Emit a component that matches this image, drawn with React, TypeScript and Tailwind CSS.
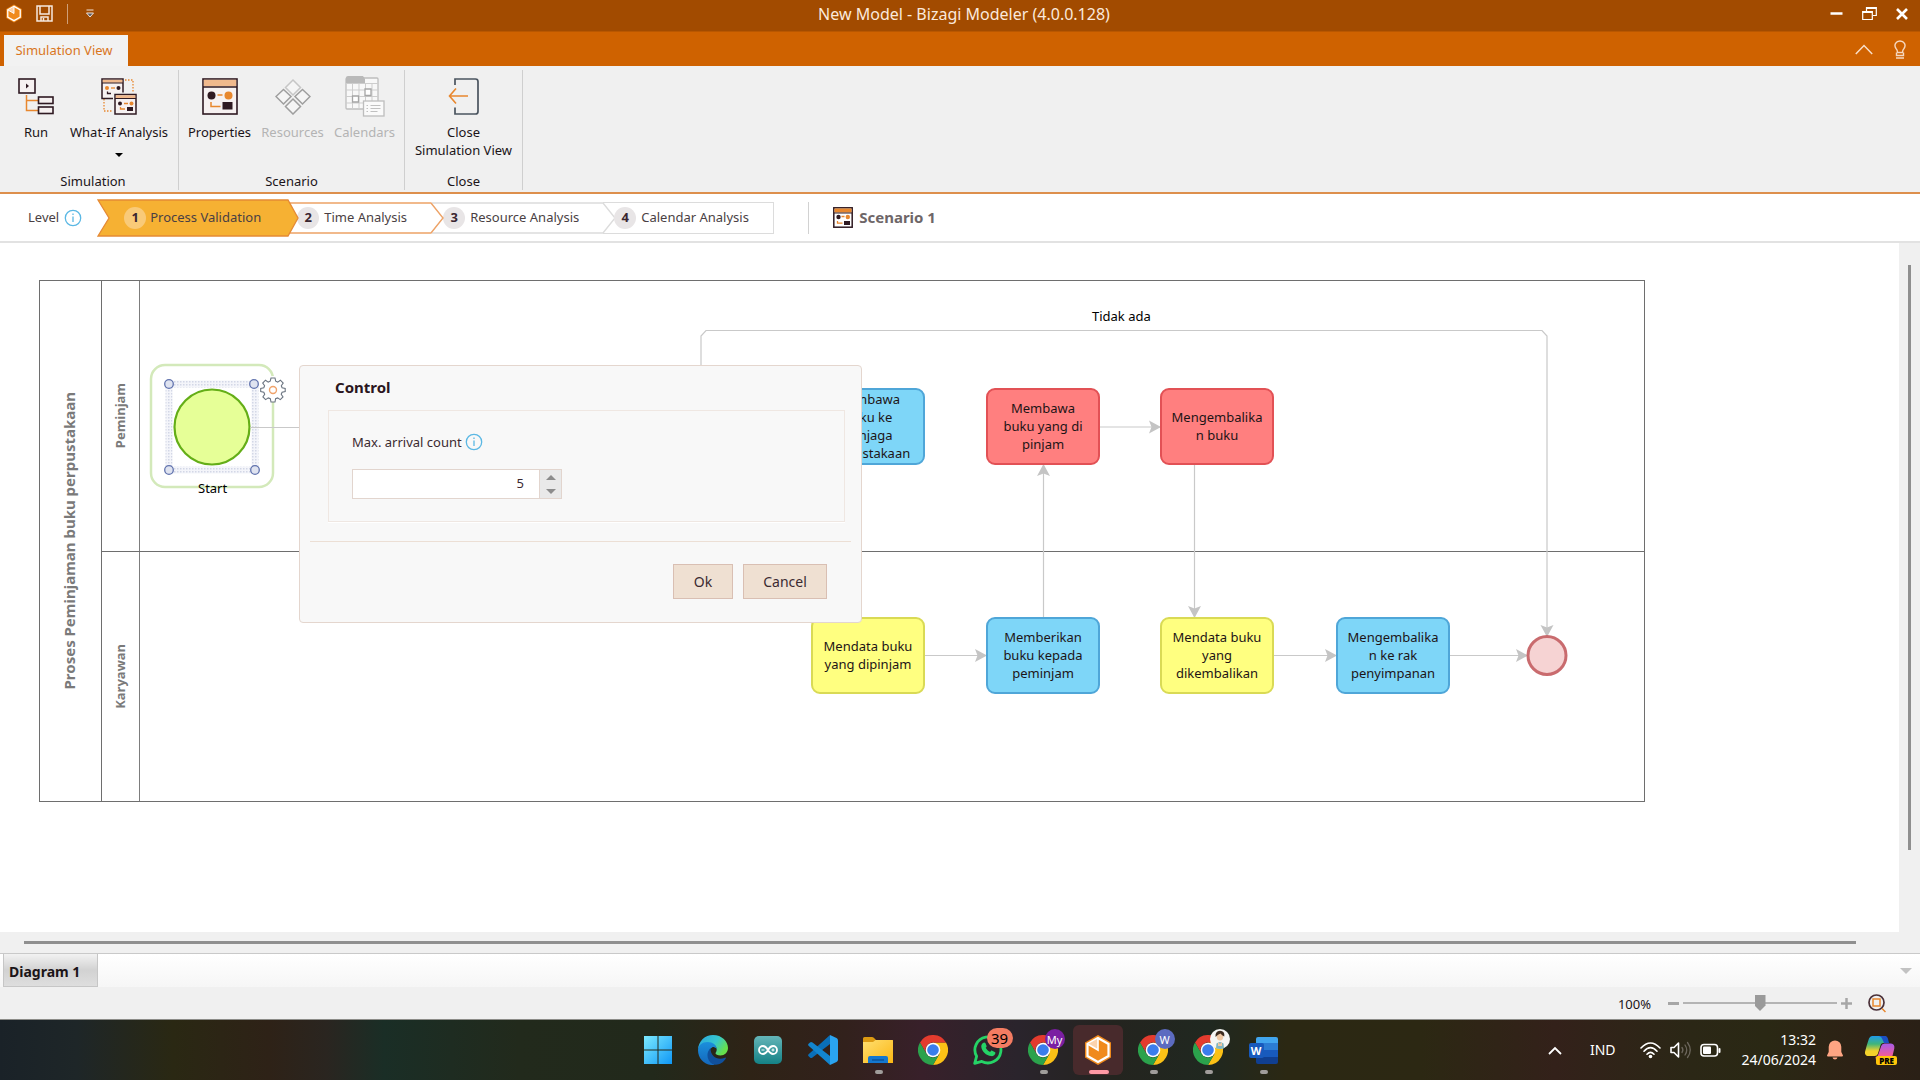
import { useState, type ReactNode } from "react";

const DARK = "#2f1a22";
const ORANGE = "#e8872e";

/* ---------- shared drawings ---------- */

function BizagiMark({ className }: { className: string }) {
  return (
    <svg viewBox="0 0 30 32" className={className} aria-hidden="true">
      <path d="M15 1 28 8.5v15L15 31 2 23.500V8.500z" fill="#f08a1c" />
      <path d="M15 4 4.500 10v12L15 28l10.500-6V10z" fill="#f08a1c" stroke="#fff" strokeWidth="2.200" />
      <path d="M5 10 15 4.500V16z" fill="#fbd3ae" />
      <path d="M15 4v12L5 10.200" fill="none" stroke="#fff" strokeWidth="1.600" />
    </svg>
  );
}

function InfoIcon() {
  return (
    <svg viewBox="0 0 18 18" className="size-[18px] shrink-0" aria-hidden="true">
      <circle cx="9" cy="9" r="7.700" fill="none" stroke="#5bb8e4" strokeWidth="1.300" />
      <path d="M9 7.500v5.500M9 4.500v1.500" stroke="#5bb8e4" strokeWidth="1.300" />
    </svg>
  );
}

function ScenarioIcon({ className }: { className: string }) {
  return (
    <svg viewBox="0 0 36 37" className={className} aria-hidden="true">
      <rect x="1" y="1" width="34" height="35" fill="#f6f1f1" stroke={DARK} strokeWidth="1.600" />
      <rect x="1.800" y="1.800" width="32.400" height="6.500" fill="#f0b98d" />
      <path d="M1 9h34" stroke={DARK} strokeWidth="1.400" />
      <circle cx="9.500" cy="17.500" r="4" fill={DARK} />
      <circle cx="26.500" cy="17.500" r="4" fill={ORANGE} />
      <path d="M15.500 17h5M9 24v4.500h9.500" fill="none" stroke={ORANGE} strokeWidth="1.500" />
      <rect x="20.500" y="24" width="10" height="7.500" fill={DARK} />
    </svg>
  );
}

function SmallScenarioIcon() {
  return (
    <svg viewBox="0 0 20 21" className="h-[21px] w-5" aria-hidden="true">
      <rect x=".8" y=".8" width="18.400" height="19.400" fill="#fff" stroke={DARK} strokeWidth="1.500" />
      <rect x="1.500" y="1.500" width="17" height="4" fill={ORANGE} />
      <path d="M1 6h18" stroke={DARK} />
      <circle cx="5.500" cy="10" r="2.200" fill={DARK} />
      <circle cx="14.800" cy="10" r="2.200" fill={ORANGE} />
      <path d="M8.500 9.500h3M4.500 14v2.200h5" fill="none" stroke={ORANGE} strokeWidth="1.300" />
      <rect x="11" y="14" width="6" height="4" fill={DARK} />
    </svg>
  );
}

/* ---------- ribbon icons ---------- */

function RunIcon() {
  return (
    <svg viewBox="0 0 36 37" className="h-[37px] w-9" fill="none" aria-hidden="true">
      <path d="M8.500 17v15.500H20M8.500 22.500H20" stroke={ORANGE} strokeWidth="1.500" />
      <g stroke={DARK} strokeWidth="1.600" fill="#f6f1f1">
        <rect x="1" y="1" width="16" height="14" />
        <rect x="20.500" y="19" width="14.500" height="6.500" />
        <rect x="20.500" y="29" width="14.500" height="6.500" />
      </g>
      <path d="M8 5.500 11 8l-3 2.500z" fill={DARK} />
    </svg>
  );
}

function WhatIfIcon() {
  return (
    <svg viewBox="0 0 36 37" className="h-[37px] w-9" fill="none" aria-hidden="true">
      <path d="M24 2h8v12M3 21v12h8" stroke={ORANGE} strokeWidth="1.300" strokeDasharray="1.500 1.500" />
      <rect x="1" y="1" width="21" height="19.500" fill="#f6f1f1" stroke={DARK} strokeWidth="1.500" />
      <rect x="1.800" y="1.800" width="19.500" height="3" fill="#f0b98d" />
      <path d="M1 5h21" stroke={DARK} />
      <circle cx="6" cy="10" r="2" fill={ORANGE} />
      <circle cx="17.500" cy="10" r="2" fill={DARK} />
      <path d="M10 10h4" stroke={ORANGE} strokeWidth="1.300" />
      <path d="M6.500 13.500v2H10" stroke={DARK} strokeWidth="1.300" />
      <rect x="12" y="14.500" width="25" height="24" fill="#f0f0f0" />
      <rect x="14" y="16.500" width="21" height="19.500" fill="#f6f1f1" stroke={DARK} strokeWidth="1.500" />
      <rect x="14.800" y="17.300" width="19.500" height="3" fill="#f0b98d" />
      <path d="M14 20.500h21" stroke={DARK} />
      <circle cx="19" cy="25.500" r="2" fill={DARK} />
      <circle cx="30.500" cy="25.500" r="2" fill={ORANGE} />
      <path d="M23 25.500h4M19.500 29v2H24" stroke={ORANGE} strokeWidth="1.300" />
      <rect x="26" y="29" width="6" height="4" fill={DARK} />
    </svg>
  );
}

function ResourcesIcon() {
  return (
    <svg viewBox="0 0 36 37" className="h-[37px] w-9" fill="#f5f5f5" strokeWidth="1.500" aria-hidden="true">
      <path d="m18 2 7.500 7.500L18 17l-7.500-7.500z" stroke="#c6c6c6" />
      <path d="m8.500 11.500 7.500 7-7.500 7.500L1 18.500zM27.500 11.500l7.500 7-7.500 7.500-7.500-7.500zM18 21l7.500 7.500L18 36l-7.500-7.500z" stroke="#9e9e9e" />
    </svg>
  );
}

function CalendarsIcon() {
  return (
    <svg viewBox="0 0 40 42" className="h-[42px] w-10" fill="none" aria-hidden="true">
      <rect x="1" y="3" width="32" height="31" rx="1" fill="#f8f8f8" stroke="#bdbdbd" strokeWidth="1.300" />
      <path d="M1 2.500Q1 1 3 1h15l2 3v4H1z" fill="#b9b9b9" />
      <path d="M1 8.500h32M1 15h32M1 21.500h32M1 28h32M7.500 9v25M14 9v25M20.500 9v25M27 9v25" stroke="#cdcdcd" />
      <path d="M20 14h6v6.500h-6zM7.500 21h6v6h-6z" fill="#fff" stroke="#a5a5a5" strokeWidth="1.300" />
      <rect x="18.500" y="26" width="20.500" height="15" fill="#fafafa" stroke="#bdbdbd" strokeWidth="1.300" />
      <path d="M21.500 30.500h1.500M21.500 33.500h1.500M21.500 36.500h1.500M25.500 30.500h10M25.500 33.500h10M25.500 36.500h7" stroke="#c0c0c0" strokeWidth="1.200" />
    </svg>
  );
}

function CloseViewIcon() {
  return (
    <svg viewBox="0 0 32 37" className="h-[37px] w-8" fill="none" aria-hidden="true">
      <path d="M7 7V1h20.500q2.500 0 2.500 2.500v30q0 2.500-2.500 2.500H7v-6.500" stroke="#4a545f" strokeWidth="1.700" />
      <path d="M20 18H1.500M8 10.500 1.500 18l6.500 7.500" stroke={ORANGE} strokeWidth="1.600" />
    </svg>
  );
}

function RibbonButton({ icon, label, width, disabled, children }: { icon: ReactNode; label: ReactNode; width: string; disabled?: boolean; children?: ReactNode }) {
  return (
    <button type="button" disabled={disabled} className={`flex flex-col items-center text-center leading-[18px] disabled:text-[#b4b4b4] ${width}`}>
      <span className="mb-2 flex h-[38px] items-center justify-center">{icon}</span>
      {label}
      {children}
    </button>
  );
}

function RibbonGroup({ title, children }: { title: string; children: ReactNode }) {
  return (
    <section aria-label={title} className="mt-1 flex h-[120px] flex-col justify-between border-r border-[#cfcfcf] px-1 pt-[7px] first:[&>div:last-child]:pl-2">
      <div className="flex">{children}</div>
      <div className="text-center leading-[18px]">{title}</div>
    </section>
  );
}

/* ---------- level steps ---------- */

function StepBadge({ n, active }: { n: number; active?: boolean }) {
  return (
    <span className={`flex size-[22px] shrink-0 items-center justify-center rounded-full text-[13px] font-bold text-[#3a2630] ${active ? "bg-[#f9ca78]" : "bg-[#e8e5e6]"}`}>
      {n}
    </span>
  );
}

function LevelSteps() {
  return (
    <nav aria-label="Level" className="flex items-center text-[13px] text-[#4a3f44]">
      <button type="button" className="relative z-30 flex h-[38px] w-[202px] items-center gap-1 pl-[27px]">
        <svg viewBox="0 0 202 38" className="absolute inset-0 size-full" aria-hidden="true">
          <path d="M1 1h190l10 18-10 18H1l11-18z" fill="#f6b133" stroke="#e58a35" strokeWidth="1.300" />
        </svg>
        <span className="relative flex items-center gap-1"><StepBadge n={1} active />Process Validation</span>
      </button>
      <button type="button" className="relative z-20 -ml-3 flex h-[32px] w-[158px] items-center pl-[10px]">
        <svg viewBox="0 0 158 32" className="absolute inset-0 size-full" aria-hidden="true">
          <path d="M1 1h143l12 15-12 15H1" fill="#fff" stroke="#eda266" strokeWidth="1.400" />
        </svg>
        <span className="relative flex items-center gap-[5px]"><StepBadge n={2} />Time Analysis</span>
      </button>
      <button type="button" className="relative z-10 -ml-[14px] flex h-[32px] w-[186px] items-center pl-[12px]">
        <svg viewBox="0 0 186 32" className="absolute inset-0 size-full" aria-hidden="true">
          <path d="M1 1h171l12 15-12 15H1" fill="#fff" stroke="#dcdcdc" strokeWidth="1.400" />
        </svg>
        <span className="relative flex items-center gap-[5px]"><StepBadge n={3} />Resource Analysis</span>
      </button>
      <button type="button" className="relative -ml-[14px] flex h-[32px] w-[171px] items-center border border-[#dcdcdc] pl-[10px]">
        <span className="relative z-20 flex items-center gap-[5px]"><StepBadge n={4} />Calendar Analysis</span>
      </button>
    </nav>
  );
}

/* ---------- diagram ---------- */

const tasks = [
  { lines: ["Membawa", "buku ke", "penjaga", "perpustakaan"], look: "left-[811px] top-[145px] border-[#4fa6d8] bg-[#7ed6f8]" },
  { lines: ["Membawa", "buku yang di", "pinjam"], look: "left-[986px] top-[145px] border-[#e25155] bg-[#ff7f7f]" },
  { lines: ["Mengembalika", "n buku"], look: "left-[1160px] top-[145px] border-[#e25155] bg-[#ff7f7f]" },
  { lines: ["Mendata buku", "yang dipinjam"], look: "left-[811px] top-[374px] border-[#d9da55] bg-[#ffff80]" },
  { lines: ["Memberikan", "buku kepada", "peminjam"], look: "left-[986px] top-[374px] border-[#4fa6d8] bg-[#7ed6f8]" },
  { lines: ["Mendata buku", "yang", "dikembalikan"], look: "left-[1160px] top-[374px] border-[#d9da55] bg-[#ffff80]" },
  { lines: ["Mengembalika", "n ke rak", "penyimpanan"], look: "left-[1336px] top-[374px] border-[#4fa6d8] bg-[#7ed6f8]" },
];

function Lane({ title, height }: { title: string; height: string }) {
  return (
    <div className={`flex ${height}`}>
      <div className="flex w-[38px] items-center justify-center border-r border-[#7d7d7d]">
        <span className="rotate-180 text-[13px] font-bold text-[#7a7a7a] [writing-mode:vertical-rl]">{title}</span>
      </div>
    </div>
  );
}

function Pool() {
  return (
    <div className="absolute left-[39px] top-[37px] flex w-[1606px] border border-[#6e6e6e]">
      <div className="flex w-[62px] items-center justify-center border-r border-[#6e6e6e] pr-[2px]">
        <span className="rotate-180 text-[15px] font-bold text-[#7a7a7a] [writing-mode:vertical-rl]">Proses Peminjaman buku perpustakaan</span>
      </div>
      <div className="flex-1 divide-y divide-[#6e6e6e]">
        <Lane title="Peminjam" height="h-[271px]" />
        <Lane title="Karyawan" height="h-[249px]" />
      </div>
    </div>
  );
}

function Connections() {
  return (
    <svg width="1700" height="620" className="absolute left-0 top-0" fill="none" aria-hidden="true">
      <defs>
        <marker id="arrow" markerWidth="12" markerHeight="14" refX="11" refY="7" orient="auto" markerUnits="userSpaceOnUse">
          <path d="M0 .5 12 7 0 13.500 2.500 7z" fill="#c4c4c4" />
        </marker>
        <pattern id="dots" width="3" height="3" patternUnits="userSpaceOnUse">
          <rect width="3" height="3" fill="#f4f5fa" />
          <rect width="1.500" height="1.500" fill="#d3d7e6" />
        </pattern>
      </defs>
      <rect x="151" y="122" width="122" height="122" rx="14" stroke="#d3e9ba" strokeWidth="2.500" />
      <rect x="169" y="141" width="86" height="86" stroke="url(#dots)" strokeWidth="7" />
      <circle cx="212" cy="184" r="37.500" fill="#e6ff97" stroke="#64ae17" strokeWidth="2.200" />
      <g fill="#dfe3f0" stroke="#6173ae" strokeWidth="1.300">
        <circle cx="169" cy="141" r="4.300" />
        <circle cx="254" cy="141" r="4.300" />
        <circle cx="169" cy="227" r="4.300" />
        <circle cx="255" cy="227" r="4.300" />
      </g>
      <circle cx="273" cy="146" r="13" fill="#fff" />
      <path
        d="m271 135 4 0 .7 3.200 2 .9 2.700-1.900 2.800 2.800-1.900 2.800.8 2 3.100.6v3.200l-3.100.7-.9 2 1.800 2.600-2.700 2.700-2.700-1.700-2 .8-.6 3.300h-4l-.7-3.300-2-.8-2.700 1.700-2.700-2.700 1.800-2.600-.9-2-3.100-.7v-3.200l3.100-.6.8-2-1.900-2.800 2.800-2.800 2.700 1.900 2-.9z"
        fill="#fff"
        stroke="#6b7480"
        strokeWidth="1.100"
      />
      <circle cx="273" cy="147" r="3.500" stroke="#f0a36b" strokeWidth="1.400" />
      <g stroke="#c9c9c9" strokeWidth="1.200">
        <path d="M250 184.500h60" />
        <path d="M701 145V93l5-5.500h836l5 5.500v300" markerEnd="url(#arrow)" />
        <path d="M1100 184h60" markerEnd="url(#arrow)" />
        <path d="M1043.500 374V222" markerEnd="url(#arrow)" />
        <path d="M1194.500 222v152" markerEnd="url(#arrow)" />
        <path d="M925 412.500h61" markerEnd="url(#arrow)" />
        <path d="M1274 412.500h62" markerEnd="url(#arrow)" />
        <path d="M1450 412.500h77" markerEnd="url(#arrow)" />
      </g>
      <circle cx="1547" cy="412.500" r="19" fill="#f6d3d3" stroke="#c96b6e" strokeWidth="3" />
    </svg>
  );
}

function ControlDialog() {
  const [count, setCount] = useState(5);
  return (
    <div role="dialog" aria-labelledby="dialog-title" className="absolute left-[299px] top-[122px] w-[563px] rounded-[4px] border border-[#e4d6ce] bg-[#f8f8f8] px-[10px] pb-[23px] pt-[9px] text-[#3b2a31]">
      <h2 id="dialog-title" className="pl-[25px] text-[15px] font-bold leading-6 text-[#2b1620]">Control</h2>
      <div className="ml-[18px] mr-[6px] mt-[11px] h-[112px] border border-[#efe7e2] px-[23px] pt-[21px] shadow-[0_1px_0_#fff]">
        <div className="flex items-center gap-[3px] text-[13px] leading-5">
          <label htmlFor="arrivals">Max. arrival count</label>
          <InfoIcon />
        </div>
        <div className="mt-[17px] flex h-[30px] w-[210px] border border-[#e2d5ce] bg-white">
          <input
            id="arrivals"
            value={count}
            onChange={(e) => setCount(Number(e.target.value) || 0)}
            className="w-full min-w-0 flex-1 pr-[15px] text-right text-[13px] outline-none"
          />
          <div className="flex w-[22px] flex-col border-l border-[#e2d5ce] bg-[#e9e9e9]">
            <button type="button" aria-label="Increase" onClick={() => setCount(count + 1)} className="flex flex-1 items-center justify-center">
              <span className="border-x-[5px] border-b-[5px] border-x-transparent border-b-[#8c8c8c]" />
            </button>
            <button type="button" aria-label="Decrease" onClick={() => setCount(count - 1)} className="flex flex-1 items-center justify-center">
              <span className="border-x-[5px] border-t-[5px] border-x-transparent border-t-[#8c8c8c]" />
            </button>
          </div>
        </div>
      </div>
      <div className="mt-[19px] flex justify-end gap-[10px] border-t border-[#ecdfd5] pr-6 pt-[22px] text-sm">
        <button type="button" className="h-[35px] w-[60px] border border-[#d9bfb3] bg-[#efe0d2]">Ok</button>
        <button type="button" className="h-[35px] w-[84px] border border-[#d9bfb3] bg-[#efe0d2]">Cancel</button>
      </div>
    </div>
  );
}

/* ---------- taskbar ---------- */

function ChromeIcon() {
  return (
    <svg viewBox="0 0 30 30" className="size-[30px]" aria-hidden="true">
      <path d="M21.500 18.800 15 30a15 15 0 0 0 13-22.500H15z" fill="#fbc116" />
      <path d="M2 7.500A15 15 0 0 1 28 7.500H15a7.500 7.500 0 0 0-6.500 11.200z" fill="#e33b2e" />
      <path d="M2 7.500 8.500 18.700A7.500 7.500 0 0 0 21.500 18.700L15 30A15 15 0 0 1 2 7.500z" fill="#2ba24c" />
      <circle cx="15" cy="15" r="7.300" fill="#fff" />
      <circle cx="15" cy="15" r="5.800" fill="#3b7ded" />
    </svg>
  );
}

function WindowsIcon() {
  return (
    <svg viewBox="0 0 30 30" className="size-[30px]" aria-hidden="true">
      <defs>
        <linearGradient id="win" x1="0" y1="0" x2="1" y2="1">
          <stop offset="0" stopColor="#7ceaff" />
          <stop offset="1" stopColor="#0f97f5" />
        </linearGradient>
      </defs>
      <path d="M1 1h13.500v13.500H1zM15.500 1H29v13.500H15.500zM1 15.500h13.500V29H1zM15.500 15.500H29V29H15.500z" fill="url(#win)" />
    </svg>
  );
}

function EdgeIcon() {
  return (
    <svg viewBox="0 0 30 30" className="size-[30px]" aria-hidden="true">
      <defs>
        <linearGradient id="edgeTop" x1="0" y1="0" x2="1" y2=".5">
          <stop offset="0" stopColor="#2aa5df" />
          <stop offset=".6" stopColor="#36c6cf" />
          <stop offset="1" stopColor="#66e04c" />
        </linearGradient>
        <linearGradient id="edgeLow" x1="0" y1="0" x2="0" y2="1">
          <stop offset="0" stopColor="#1b8fdc" />
          <stop offset="1" stopColor="#1467bb" />
        </linearGradient>
      </defs>
      <path d="M0 14.500C.5 6 7 0 15 0c9 0 15 6.500 15 13 0 4.500-3.500 7.500-7.500 7.500-3 0-5-1.200-5-2.200 0-.8 1.200-1.300 1.200-3.800 0-3.500-3.200-6-8.200-6C5 8.500 1 11 0 14.500z" fill="url(#edgeTop)" />
      <path d="M0 15c0-5 4.500-8 9.500-8 5.500 0 9 3.200 9.200 7-1-1.500-2.700-2-4-2-3.200 2-4.200 4.500-4.200 7.500 0 5 3 8.500 6.500 10.300C8 31.500 0 24.500 0 15z" fill="url(#edgeLow)" />
      <path d="M12.500 13c-5 5-3.500 13 2 16 4.500 2 10.500-.5 13.300-5.500.3-.8-.3-1.200-1-.8-6.500 3.200-14.500-.7-14.300-9.700z" fill="#10509c" />
    </svg>
  );
}

function ArduinoIcon() {
  return (
    <svg viewBox="0 0 28 28" className="size-7" fill="none" aria-hidden="true">
      <defs>
        <linearGradient id="ard" x1="0" y1="0" x2="0" y2="1">
          <stop offset="0" stopColor="#64b5b8" />
          <stop offset="1" stopColor="#148286" />
        </linearGradient>
      </defs>
      <rect width="28" height="28" rx="5" fill="url(#ard)" />
      <path d="M14 14c-1.600-2.700-3-4-5-4a4 4 0 0 0 0 8c2 0 3.400-1.300 5-4s3-4 5-4a4 4 0 0 1 0 8c-2 0-3.400-1.300-5-4z" stroke="#fff" strokeWidth="1.800" />
      <path d="M7.500 14h3M17.500 14h3M19 12.500v3" stroke="#fff" />
    </svg>
  );
}

function CodeIcon() {
  return (
    <svg viewBox="0 0 30 30" className="size-[30px]" aria-hidden="true">
      <path d="M22 0v9L4.500 22.500Q3 23.500 2 22.500L.6 21.200q-1-1 0-2z" fill="#0a6fb8" />
      <path d="M22 30v-9L4.500 7.500Q3 6.500 2 7.500L.6 8.800q-1 1 0 2z" fill="#1285cf" />
      <path d="M22 0l6.500 3Q30 3.800 30 5.500v19q0 1.700-1.500 2.500L22 30z" fill="#2aa4f0" />
    </svg>
  );
}

function FolderIcon() {
  return (
    <svg viewBox="0 0 30 26" className="h-[26px] w-[30px]" aria-hidden="true">
      <defs>
        <linearGradient id="fold" x1="0" y1="0" x2="1" y2="1">
          <stop offset="0" stopColor="#ffdf70" />
          <stop offset="1" stopColor="#fbb613" />
        </linearGradient>
      </defs>
      <path d="M0 1.500Q0 0 1.500 0H9q1 0 1.800.8L13 3H30v8H0z" fill="#dc9a12" />
      <path d="M0 5h10l2.500-2H29q1 0 1 1v22H0z" fill="url(#fold)" />
      <path d="M5 26v-5q0-2 2-2h16q2 0 2 2v5z" fill="#1477cf" />
      <path d="M9 23h12" stroke="#0a4a8e" strokeWidth="1.200" />
    </svg>
  );
}

function WhatsAppIcon() {
  return (
    <svg viewBox="0 0 30 30" className="size-[30px]" fill="none" aria-hidden="true">
      <path d="M1.700 28.300 3.600 21.300A13 13 0 1 1 8.800 26.400z" stroke="#25d366" strokeWidth="2.800" strokeLinejoin="round" />
      <path d="M10 8c1-.8 2-.7 2.500.3l1 2.500c.3.700 0 1.200-.8 2 1 2 2.500 3.300 4.500 4.200.9-1.200 1.300-1.600 2-1.300l2.500 1.200c.8.400.8 1 .5 1.900-.6 1.700-2.300 2.500-4 2.300C13 20.500 9 16.500 8.300 12c-.2-1.700.5-3 1.700-4z" fill="#25d366" />
    </svg>
  );
}

function WordIcon() {
  return (
    <span className="relative block h-[27px] w-[29px]">
      <span className="ml-[7px] flex h-full flex-col overflow-hidden rounded-[2px]">
        <span className="flex-1 bg-[#41a5ee]" />
        <span className="flex-1 bg-[#2b7cd3]" />
        <span className="flex-1 bg-[#185abd]" />
        <span className="flex-1 bg-[#103f91]" />
      </span>
      <span className="absolute left-0 top-[6px] flex size-[15px] items-center justify-center rounded-[2px] bg-[#185abd] text-[11px] font-bold leading-none text-white">W</span>
    </span>
  );
}

function AvatarIcon() {
  return (
    <svg viewBox="0 0 20 20" className="size-5" aria-hidden="true">
      <circle cx="10" cy="10" r="10" fill="#f5f5f3" />
      <path d="M6.500 14.500q3.500-3 7 0l.5 4.800q-4 1.300-8 0z" fill="#7fb5c0" />
      <ellipse cx="10" cy="7.500" rx="3.300" ry="4" fill="#efc8a4" />
      <path d="M5.500 8Q5 2 10 1.800 15 2 14.300 7.500 12 6.500 10.500 4.500 8 5 5.500 8z" fill="#3e2c20" />
      <path d="m8 13 2 2 2-2v4H8z" fill="#efc8a4" />
    </svg>
  );
}

function TaskbarApp({ name, running, active, badge, children }: { name: string; running?: boolean; active?: boolean; badge?: ReactNode; children: ReactNode }) {
  return (
    <button type="button" aria-label={name} className="relative flex h-[60px] w-[55px] items-center justify-center">
      <span className={`relative flex size-[50px] items-center justify-center rounded-md ${active ? "bg-[#482a2c]" : ""}`}>
        {children}
      </span>
      {badge}
      {running && <span className="absolute bottom-[6px] left-[24px] h-1 w-2 rounded-full bg-[#a09d9b]" />}
      {active && <span className="absolute bottom-[6px] left-[18px] h-1 w-5 rounded-full bg-[#ff99a4]" />}
    </button>
  );
}

const badgeBase = "absolute left-[29px] top-[9px] flex size-5 items-center justify-center rounded-full text-[11px] leading-none text-white";

function Taskbar() {
  return (
    <footer className="grid h-[61px] grid-cols-[1fr_auto_1fr] items-center border-t border-[#8c8c88] bg-[linear-gradient(90deg,#1a2228_0%,#1e2628_4%,#2a2813_9%,#2e2217_14%,#2a2520_17%,#1a2e26_20%,#222a1c_27%,#22291b_34%,#2e2316_39%,#32211c_44%,#38202a_48%,#2a242c_53%,#24241f_58%,#202820_63%,#2b2813_67%,#2c2813_74%,#33211a_81%,#2b2716_88%,#2a2814_92%,#2d2115_97%,#2a2016_100%)]">
      <div />
      <div className="flex pl-px">
        <TaskbarApp name="Start"><WindowsIcon /></TaskbarApp>
        <TaskbarApp name="Edge"><EdgeIcon /></TaskbarApp>
        <TaskbarApp name="Arduino"><ArduinoIcon /></TaskbarApp>
        <TaskbarApp name="Visual Studio Code"><CodeIcon /></TaskbarApp>
        <TaskbarApp name="File Explorer" running><FolderIcon /></TaskbarApp>
        <TaskbarApp name="Chrome"><ChromeIcon /></TaskbarApp>
        <TaskbarApp name="WhatsApp" badge={<span className="absolute left-[26px] top-[8px] flex h-5 w-[26px] items-center justify-center rounded-full bg-[#f47c62] text-[15px] leading-none text-black">39</span>}><WhatsAppIcon /></TaskbarApp>
        <TaskbarApp name="Chrome, My" running badge={<span className={`${badgeBase} bg-[#7b1fa2]`}>My</span>}><ChromeIcon /></TaskbarApp>
        <TaskbarApp name="Bizagi Modeler" active><BizagiMark className="h-8 w-[30px]" /></TaskbarApp>
        <TaskbarApp name="Chrome, W" running badge={<span className={`${badgeBase} bg-[#5c6bc0]`}>W</span>}><ChromeIcon /></TaskbarApp>
        <TaskbarApp name="Chrome, profile" running badge={<span className="absolute left-[29px] top-[9px]"><AvatarIcon /></span>}><ChromeIcon /></TaskbarApp>
        <TaskbarApp name="Word" running><WordIcon /></TaskbarApp>
      </div>
      <div className="flex items-center justify-end pr-6 text-sm text-white">
        <button type="button" aria-label="Show hidden icons" className="mr-7">
          <svg viewBox="0 0 14 9" className="h-[9px] w-[14px]" fill="none" aria-hidden="true"><path d="m1 8 6-6 6 6" stroke="#fff" strokeWidth="1.800" /></svg>
        </button>
        <span className="mr-6">IND</span>
        <svg viewBox="0 0 82 20" className="mr-5 h-5 w-[82px]" fill="none" strokeLinecap="round" aria-hidden="true">
          <g stroke="#fff" strokeWidth="1.600">
            <path d="M1 8Q10.500-2 20 8M4 11.200Q10.500 4 17 11.200M7 14.200Q10.500 10.500 14 14.200" />
            <path d="M31 7.500h3l4.500-4.500v14L34 12.500h-3z" strokeLinejoin="round" />
          </g>
          <circle cx="10.500" cy="16.500" r="1.800" fill="#fff" />
          <path d="M42 7.500q1.800 2.500 0 5M45 5q3.500 5 0 10M47.500 2.500q5.500 7.500 0 15" stroke="#6c665c" strokeWidth="1.300" />
          <rect x="61" y="4.500" width="16.500" height="11.500" rx="3" stroke="#fff" strokeWidth="1.600" />
          <rect x="63" y="6.500" width="8" height="7.500" rx="1" fill="#fff" />
          <path d="M79.500 9v3" stroke="#fff" strokeWidth="2" />
        </svg>
        <span className="text-right leading-5">13:32<br />24/06/2024</span>
        <svg viewBox="0 0 16 20" className="ml-[11px] h-5 w-4" aria-hidden="true">
          <path d="M8 .5a6.300 6.300 0 0 1 6.300 6.300v5.200l1.700 3.500q0 1-1 1H1q-1 0-1-1L1.700 12V6.800A6.300 6.300 0 0 1 8 .5zM5.500 17.500h5Q10 19.500 8 19.500t-2.500-2z" fill="#ffa583" />
        </svg>
        <span className="relative ml-[22px] block h-[29px] w-[31px]">
          <svg viewBox="0 0 30 28" className="h-7 w-[30px]" aria-hidden="true">
            <defs>
              <linearGradient id="cpA" x1="0" y1="0" x2="0" y2="1">
                <stop offset="0" stopColor="#1f9bea" />
                <stop offset=".4" stopColor="#3fb57a" />
                <stop offset=".75" stopColor="#f3d22b" />
              </linearGradient>
              <linearGradient id="cpB" x1="0" y1="0" x2="0" y2="1">
                <stop offset="0" stopColor="#a65be8" />
                <stop offset=".6" stopColor="#ee5c9c" />
                <stop offset="1" stopColor="#f79a4b" />
              </linearGradient>
            </defs>
            <path d="M7 0h12q2.500 0 3.300 3l1 4h-5q-2 0-2.700 2l-2.800 9q-.8 2-3 2H4q-4.500 0-4-4Q2 8 4 2.500 5 0 7 0z" fill="url(#cpA)" />
            <path d="M14 0h6q2.300 0 3 3l1 4h-5l-1.700-4Q16.500.5 14 0z" fill="#1b4fc4" />
            <path d="M19.500 7.500H26q4 .5 3.300 5Q28 19 26 24q-1 3-4 3h-8q-2.500 0-3-3l-.5-3q2 0 2.800-2.500l2.900-8.500q.8-2.500 3.300-2.500z" fill="url(#cpB)" />
          </svg>
          <span className="absolute -right-px bottom-0 rounded-[2px] bg-[#ffc60a] px-[3px] text-[8px] font-black leading-[9px] text-black">PRE</span>
        </span>
      </div>
    </footer>
  );
}

/* ---------- page ---------- */

export default function App() {
  const [zoom, setZoom] = useState(50);
  return (
    <div className="flex min-h-screen flex-col overflow-hidden bg-[#f0f0f0] font-['Noto_Sans','Open_Sans',sans-serif] text-[13px] text-[#1b1418]">
      <header className="text-white">
        <div className="grid h-8 grid-cols-[1fr_auto_1fr] items-center border-b border-[#b95700] bg-[#a24b00]">
          <div className="flex items-center pb-1 pl-[5px]">
            <BizagiMark className="h-[19px] w-[18px]" />
            <button type="button" aria-label="Save" className="ml-[13px]">
              <svg viewBox="0 0 17 17" className="size-[17px]" fill="none" stroke="#f6e9de" strokeWidth="1.500" aria-hidden="true">
                <path d="M1 1h15v15H1zM4 1v8h9V1M5 16v-4h7v4M7.500 13v3" />
              </svg>
            </button>
            <span className="ml-[14px] h-5 w-px bg-[#cf9f78]" />
            <button type="button" aria-label="Customize toolbar" className="ml-[18px]">
              <svg viewBox="0 0 8 9" className="h-[9px] w-2" aria-hidden="true"><path d="M.5 1h7" stroke="#f3e2d5" /><path d="M.5 4h7L4 8z" fill="#5a5a60" stroke="#f3e2d5" /></svg>
            </button>
          </div>
          <h1 className="pb-1 pl-2 text-base text-[#fbe9dc]">New Model - Bizagi Modeler (4.0.0.128)</h1>
          <div className="flex items-center justify-end gap-[19px] pb-1 pr-3">
            <button type="button" aria-label="Minimize"><svg viewBox="0 0 13 13" className="size-[13px]" aria-hidden="true"><path d="M.5 6.500h12" stroke="#fff" strokeWidth="2.500" /></svg></button>
            <button type="button" aria-label="Restore"><svg viewBox="0 0 15 13" className="h-[13px] w-[15px]" fill="none" stroke="#fff" aria-hidden="true"><path d="M.7 4.500h9.600v8H.700zM4.500 4V.700h9.800V8.500H11" strokeWidth="1.200" /><path d="M.5 5h10M4.500 1.200h10" strokeWidth="1.800" /></svg></button>
            <button type="button" aria-label="Close"><svg viewBox="0 0 12 12" className="size-3" aria-hidden="true"><path d="m1 1 10 10M11 1 1 11" stroke="#fff" strokeWidth="2.600" /></svg></button>
          </div>
        </div>
        <div className="flex h-[34px] items-end justify-between bg-[#cf6200] pl-1">
          <button type="button" className="h-[31px] w-[124px] bg-[#f2f2f2] pr-1 text-[#d9761e]">Simulation View</button>
          <div className="flex items-center gap-[21px] self-center pr-[14px]">
            <button type="button" aria-label="Collapse ribbon"><svg viewBox="0 0 18 11" className="h-[11px] w-[18px]" fill="none" aria-hidden="true"><path d="m.8 10 8.200-8.500L17.200 10" stroke="#f8dfc9" strokeWidth="1.500" /></svg></button>
            <button type="button" aria-label="Tips"><svg viewBox="0 0 12 19" className="h-[19px] w-3" fill="none" stroke="#f6d8bf" strokeWidth="1.400" aria-hidden="true"><path d="M3.500 12.500Q3.500 10 2 8.500C-.5 5 2 1 6 1s6.500 4 4 7.500q-1.500 1.500-1.500 4zM2.500 12.500v3h7v-3M2 18h8" /></svg></button>
          </div>
        </div>
      </header>

      <div className="flex h-[128px] border-b-2 border-[#dd8f4c] text-[13px]">
        <RibbonGroup title="Simulation">
          <RibbonButton width="w-16" icon={<RunIcon />} label="Run" />
          <RibbonButton width="mr-1 w-[102px]" icon={<WhatIfIcon />} label="What-If Analysis">
            <span className="mt-[12px] border-x-4 border-t-4 border-x-transparent border-t-black" />
          </RibbonButton>
        </RibbonGroup>
        <RibbonGroup title="Scenario">
          <RibbonButton width="w-[73px]" icon={<ScenarioIcon className="h-[37px] w-9" />} label="Properties" />
          <RibbonButton width="w-[73px]" disabled icon={<ResourcesIcon />} label="Resources" />
          <RibbonButton width="w-[71px]" disabled icon={<CalendarsIcon />} label="Calendars" />
        </RibbonGroup>
        <RibbonGroup title="Close">
          <RibbonButton width="w-[109px]" icon={<CloseViewIcon />} label={<>Close<br />Simulation View</>} />
        </RibbonGroup>
      </div>

      <div className="flex h-[49px] items-center border-b-2 border-[#e2e2e2] bg-white pl-7">
        <span className="text-[#4a3f44]">Level</span>
        <span className="ml-[5px] mr-[15px]"><InfoIcon /></span>
        <LevelSteps />
        <span className="ml-[34px] h-8 w-px bg-[#d2d2d2]" />
        <span className="ml-6"><SmallScenarioIcon /></span>
        <span className="ml-[6px] text-[15px] font-bold text-[#6e6668]">Scenario 1</span>
      </div>

      <main className="flex flex-1">
        <div className="relative min-h-[689px] flex-1 overflow-hidden bg-white">
          <Pool />
          <Connections />
          <span className="absolute left-[198px] top-[236px] leading-[18px] text-black">Start</span>
          <span className="absolute left-[1092px] top-[64px] leading-[18px] text-black">Tidak ada</span>
          {tasks.map((t) => (
            <div key={t.look} className={`absolute flex h-[77px] w-[114px] flex-col items-center justify-center whitespace-nowrap rounded-[9px] border-2 pb-[2px] leading-[18px] text-[#1d1416] ${t.look}`}>
              {t.lines.map((line) => (
                <span key={line}>{line}</span>
              ))}
            </div>
          ))}
          <ControlDialog />
        </div>
        <div className="flex w-[21px] justify-center pt-[22px]">
          <span className="h-[585px] w-[3px] bg-[#8f8f8f]" />
        </div>
      </main>

      <div className="flex h-[21px] items-center pl-6 pr-16">
        <span className="h-[3px] flex-1 bg-[#8f8f8f]" />
      </div>
      <div className="flex h-[34px] justify-between border-t border-[#c9c9c9] bg-gradient-to-b from-white to-[#f6f6f6] pl-[3px]">
        <button type="button" className="w-[95px] border border-t-0 border-[#c6c6c6] bg-gradient-to-b from-[#f2f2f2] via-[#d2d2d2] to-[#dedede] pl-[5px] pt-1 text-left text-sm font-bold">Diagram 1</button>
        <button type="button" aria-label="Diagram list" className="pr-2">
          <span className="block border-x-[6px] border-t-[6px] border-x-transparent border-t-[#c2c2c2]" />
        </button>
      </div>
      <div className="flex h-8 items-center justify-end pr-[34px]">
        <label htmlFor="zoom" className="pt-1">100%</label>
        <button type="button" aria-label="Zoom out" className="ml-[17px] h-[3px] w-[11px] bg-[#a6a6a6]" />
        <input
          id="zoom"
          type="range"
          value={zoom}
          onChange={(e) => setZoom(Number(e.target.value))}
          className="ml-1 h-5 w-[154px] appearance-none bg-[linear-gradient(#b4b4b4,#b4b4b4)] bg-[length:100%_2px] bg-center bg-no-repeat [&::-webkit-slider-thumb]:h-4 [&::-webkit-slider-thumb]:w-[11px] [&::-webkit-slider-thumb]:appearance-none [&::-webkit-slider-thumb]:bg-[#9a9a9a] [&::-webkit-slider-thumb]:[clip-path:polygon(0_0,100%_0,100%_65%,50%_100%,0_65%)]"
        />
        <button type="button" aria-label="Zoom in" className="ml-1">
          <svg viewBox="0 0 11 11" className="size-[11px]" aria-hidden="true"><path d="M5.500 0v11M0 5.500h11" stroke="#a6a6a6" strokeWidth="2.500" /></svg>
        </button>
        <button type="button" aria-label="Fit to window" className="ml-4">
          <svg viewBox="0 0 18 19" className="h-[19px] w-[18px]" fill="none" aria-hidden="true">
            <circle cx="8.500" cy="8.500" r="7.500" stroke="#4a3038" strokeWidth="1.700" />
            <path d="M5 5h7v7H5zM14 14.500l3.500 3.500" stroke={ORANGE} strokeWidth="1.500" />
          </svg>
        </button>
      </div>
      <Taskbar />
    </div>
  );
}
